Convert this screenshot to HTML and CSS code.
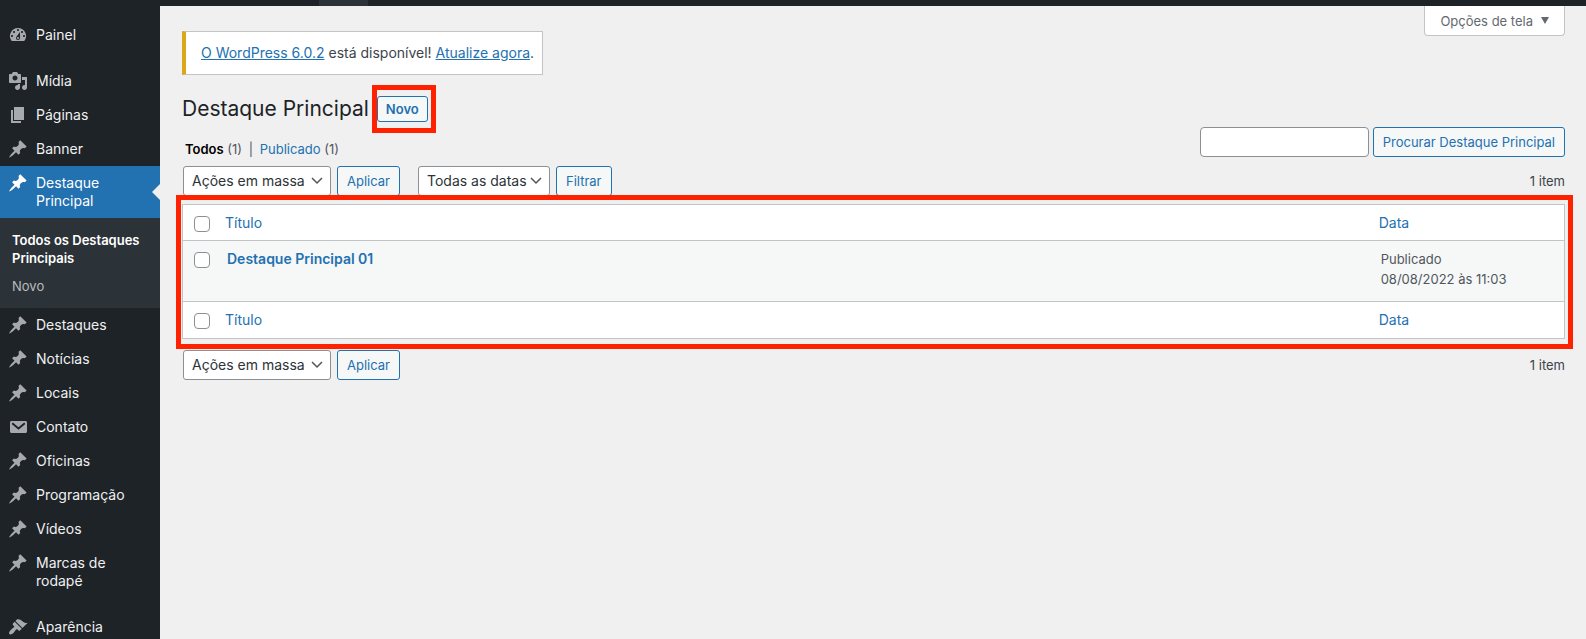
FILE: index.html
```html
<!DOCTYPE html>
<html lang="pt-BR">
<head>
    <meta charset="UTF-8">
    <meta name="viewport" content="width=device-width, initial-scale=1.0">
    <title>Destaque Principal</title>
    <link rel="stylesheet" href="styles.css">
</head>
<body>

<!-- Ícones do menu -->
<svg class="sprite" aria-hidden="true">
    <symbol id="icon-dashboard" viewBox="0 0 20 20"><path fill-rule="evenodd" d="M3.76 16h12.48A7.998 7.998 0 0 0 10 3a7.998 7.998 0 0 0-6.24 13zM10 4c.55 0 1 .45 1 1s-.45 1-1 1-1-.45-1-1 .45-1 1-1zM6 6c.55 0 1 .45 1 1s-.45 1-1 1-1-.45-1-1 .45-1 1-1zm8 0c.55 0 1 .45 1 1s-.45 1-1 1-1-.45-1-1 .45-1 1-1zm-5.37 5.55L12 7v6c0 1.1-.9 2-2 2s-2-.9-2-2c0-.57.24-1.08.63-1.45zM4 10c.55 0 1 .45 1 1s-.45 1-1 1-1-.45-1-1 .45-1 1-1zm12 0c.55 0 1 .45 1 1s-.45 1-1 1-1-.45-1-1 .45-1 1-1zm-5 3c0-.55-.45-1-1-1s-1 .45-1 1 .45 1 1 1 1-.45 1-1z"/></symbol>
    <symbol id="icon-media" viewBox="0 0 20 20"><path fill-rule="evenodd" d="M13 11V4c0-.55-.45-1-1-1h-1.67L9 1H5L3.67 3H2c-.55 0-1 .45-1 1v7c0 .55.45 1 1 1h10c.55 0 1-.45 1-1zM7 4.5c1.38 0 2.5 1.12 2.5 2.5S8.38 9.5 7 9.5 4.5 8.38 4.5 7 5.62 4.5 7 4.5zM14 6h5v10.5c0 1.38-1.12 2.5-2.5 2.5S14 17.88 14 16.5s1.12-2.5 2.5-2.5c.17 0 .34.02.5.05V9h-3V6zm-4 8.05V13h2v3.5c0 1.38-1.12 2.5-2.5 2.5S7 17.88 7 16.5 8.12 14 9.5 14c.17 0 .34.02.5.05z"/></symbol>
    <symbol id="icon-page" viewBox="0 0 20 20"><path d="M6 15V2h10v13H6zm-1 1h8v2H3V5h2v11z"/></symbol>
    <symbol id="icon-pin" viewBox="0 0 20 20"><path d="M10.44 3.02l1.82-1.82 6.36 6.35-1.83 1.82c-1.05-.68-2.48-.57-3.41.36l-.75.75c-.92.93-1.04 2.35-.35 3.41l-1.83 1.82-2.41-2.41-2.8 2.79c-.42.42-3.38 2.71-3.8 2.29s1.86-3.39 2.28-3.81l2.79-2.79L4.1 9.36l1.83-1.82c1.05.69 2.48.57 3.4-.36l.75-.75c.93-.92 1.05-2.35.36-3.41z"/></symbol>
    <symbol id="icon-email" viewBox="0 0 20 20"><path d="M3.5 4h14c.83 0 1.5.67 1.5 1.5v9c0 .83-.67 1.5-1.5 1.5h-14c-.83 0-1.5-.67-1.5-1.5v-9C2 4.670 2.670 4 3.500 4z"/><path d="M4.200 6.200l6.300 5.300 6.300-5.300" fill="none" stroke="#1d2327" stroke-width="1.800"/></symbol>
    <symbol id="icon-appearance" viewBox="0 0 20 20"><path d="M14.48 11.06L7.41 3.99l1.5-1.5c.5-.56 2.3-.47 3.51.32 1.21.8 1.43 1.28 2.91 2.1 1.18.64 2.45 1.26 4.45.85zm-.71.71L6.7 4.7 4.93 6.47c-.39.39-.39 1.02 0 1.41l1.06 1.06c.39.39.39 1.03 0 1.42-.6.6-1.43 1.11-2.21 1.69-.35.26-.7.53-1.01.84C1.43 14.23.4 16.08 1.4 17.07c.99 1 2.84-.03 4.18-1.36.31-.31.58-.66.85-1.02.57-.78 1.08-1.61 1.69-2.21.39-.39 1.02-.39 1.41 0l1.06 1.06c.39.39 1.02.39 1.41 0z"/></symbol>
</svg>

<div class="admin-bar"><span class="admin-bar-item"></span></div>

<div class="layout">
    <nav class="menu">
        <a class="menu-item" href="#"><svg class="icon"><use href="#icon-dashboard"/></svg><span>Painel</span></a>
        <div class="separator"></div>
        <a class="menu-item" href="#"><svg class="icon"><use href="#icon-media"/></svg><span>Mídia</span></a>
        <a class="menu-item" href="#"><svg class="icon"><use href="#icon-page"/></svg><span>Páginas</span></a>
        <a class="menu-item" href="#"><svg class="icon"><use href="#icon-pin"/></svg><span>Banner</span></a>
        <a class="menu-item current" href="#"><svg class="icon"><use href="#icon-pin"/></svg><span>Destaque Principal</span></a>
        <div class="submenu">
            <a class="current" href="#">Todos os Destaques Principais</a>
            <a href="#">Novo</a>
        </div>
        <a class="menu-item" href="#"><svg class="icon"><use href="#icon-pin"/></svg><span>Destaques</span></a>
        <a class="menu-item" href="#"><svg class="icon"><use href="#icon-pin"/></svg><span>Notícias</span></a>
        <a class="menu-item" href="#"><svg class="icon"><use href="#icon-pin"/></svg><span>Locais</span></a>
        <a class="menu-item" href="#"><svg class="icon"><use href="#icon-email"/></svg><span>Contato</span></a>
        <a class="menu-item" href="#"><svg class="icon"><use href="#icon-pin"/></svg><span>Oficinas</span></a>
        <a class="menu-item" href="#"><svg class="icon"><use href="#icon-pin"/></svg><span>Programação</span></a>
        <a class="menu-item" href="#"><svg class="icon"><use href="#icon-pin"/></svg><span>Vídeos</span></a>
        <a class="menu-item" href="#"><svg class="icon"><use href="#icon-pin"/></svg><span>Marcas de rodapé</span></a>
        <div class="separator"></div>
        <a class="menu-item" href="#"><svg class="icon"><use href="#icon-appearance"/></svg><span>Aparência</span></a>
    </nav>

    <main class="content">
        <div class="top-row">
            <div class="notice"><a href="#">O WordPress 6.0.2</a> está disponível! <a href="#">Atualize agora</a>.</div>
            <button type="button" class="screen-options">Opções de tela <span class="arrow"></span></button>
        </div>

        <div class="title-row">
            <h1>Destaque Principal</h1>
            <div class="highlight highlight-new">
                <a class="title-action" href="#">Novo</a>
            </div>
        </div>

        <div class="filter-row">
            <div class="views">
                <a class="current" href="#">Todos</a> <span>(1)</span>
                <span class="divider">|</span>
                <a href="#">Publicado</a> <span>(1)</span>
            </div>
            <form class="search">
                <input type="search" class="search-input" aria-label="Procurar Destaque Principal">
                <button type="button" class="button">Procurar Destaque Principal</button>
            </form>
        </div>

        <div class="tablenav">
            <select class="select-bulk" aria-label="Ações em massa">
                <option>Ações em massa</option>
            </select>
            <button type="button" class="button">Aplicar</button>
            <select class="select-date" aria-label="Filtrar por data">
                <option>Todas as datas</option>
            </select>
            <button type="button" class="button">Filtrar</button>
            <span class="count">1 item</span>
        </div>

        <div class="highlight highlight-table">
            <table class="list">
                <thead>
                    <tr>
                        <th class="check"><input type="checkbox" aria-label="Selecionar todos"></th>
                        <th><a href="#">Título</a></th>
                        <th class="date"><a href="#">Data</a></th>
                    </tr>
                </thead>
                <tbody>
                    <tr>
                        <td class="check"><input type="checkbox" aria-label="Selecionar Destaque Principal 01"></td>
                        <td><a class="row-title" href="#">Destaque Principal 01</a></td>
                        <td class="date">Publicado<br>08/08/2022 às 11:03</td>
                    </tr>
                </tbody>
                <tfoot>
                    <tr>
                        <th class="check"><input type="checkbox" aria-label="Selecionar todos"></th>
                        <th><a href="#">Título</a></th>
                        <th class="date"><a href="#">Data</a></th>
                    </tr>
                </tfoot>
            </table>
        </div>

        <div class="tablenav bottom">
            <select class="select-bulk" aria-label="Ações em massa">
                <option>Ações em massa</option>
            </select>
            <button type="button" class="button">Aplicar</button>
            <span class="count">1 item</span>
        </div>
    </main>
</div>

</body>
</html>
```

FILE: styles.css
```css
* {
    box-sizing: border-box;
}
body {
    margin: 0;
    height: 100vh;
    display: flex;
    flex-direction: column;
    overflow: hidden;
    background-color: #f0f0f0;
    color: #3c434a;
    font-family: Inter, "Liberation Sans", sans-serif;
    font-size: 13px;
    line-height: 20px;
}
a {
    color: #2271b1;
    text-decoration: none;
}
button, input, select {
    font-family: inherit;
    margin: 0;
}
.sprite {
    display: none;
}

/* Barra superior */
.admin-bar {
    flex: none;
    height: 6px;
    padding-left: 319px;
    background-color: #1d2327;
}
.admin-bar-item {
    display: block;
    width: 49px;
    height: 100%;
    background-color: #2c3338;
}
.layout {
    flex: 1;
    display: flex;
    min-height: 0;
}

/* Menu lateral */
.menu {
    flex: none;
    width: 160px;
    padding-top: 12px;
    background-color: #1d2327;
}
.menu-item {
    display: flex;
    gap: 8px;
    padding: 8px 20px 8px 8px;
    color: #f0f0f1;
    font-size: 14px;
    line-height: 18px;
}
.icon {
    flex: none;
    width: 20px;
    height: 20px;
    margin: -1px 0;
    fill: #a7aaad;
}
.menu-item.current {
    position: relative;
    background-color: #2271b1;
    color: #fff;
}
.menu-item.current .icon {
    fill: #fff;
}
.menu-item.current::after {
    content: "";
    position: absolute;
    right: 0;
    top: 50%;
    margin-top: -8px;
    border: 8px solid transparent;
    border-left: none;
    border-right-color: #f0f0f0;
}
.separator {
    height: 12px;
}
.submenu {
    padding: 8px 0;
    background-color: #2c3338;
}
.submenu a {
    display: block;
    padding: 5px 12px;
    color: #b9bcbf;
    line-height: 18px;
}
.submenu a.current {
    color: #fff;
    font-weight: 600;
}

/* Conteúdo */
.content {
    flex: 1;
    padding: 0 21px 0 22px;
}
.top-row {
    display: flex;
    justify-content: space-between;
    align-items: flex-start;
}
.notice {
    margin-top: 25px;
    padding: 11px 8px 11px 15px;
    background-color: #fff;
    border: 1px solid #c3c4c7;
    border-left: 4px solid #dba617;
    font-size: 14px;
}
.notice a {
    text-decoration: underline;
}
.screen-options {
    display: flex;
    align-items: center;
    gap: 8px;
    height: 30px;
    padding: 0 15px;
    background-color: #fff;
    border: 1px solid #c3c4c7;
    border-top: none;
    border-radius: 0 0 4px 4px;
    color: #646970;
    font-size: 13px;
}
.arrow {
    border: 4px solid transparent;
    border-top: 7px solid #646970;
    border-bottom: none;
}
.title-row {
    display: flex;
    align-items: center;
    gap: 8px;
    height: 26px;
    margin-top: 21px;
}
h1 {
    margin: 0;
    color: #1d2327;
    font-size: 21px;
    font-weight: 400;
    line-height: 26px;
}
.title-action {
    display: block;
    padding: 0 8px;
    background-color: #f6f7f7;
    border: 1px solid #2271b1;
    border-radius: 3px;
    font-weight: 600;
    line-height: 24px;
}

/* Molduras vermelhas */
.highlight {
    position: relative;
}
.highlight::after {
    content: "";
    position: absolute;
    border: 5px solid #ff2200;
    pointer-events: none;
}
.highlight-new::after {
    inset: -11px -8px -11px -5px;
}
.highlight-table::after {
    inset: -9px -8px -10px -6px;
}

.filter-row {
    display: flex;
    justify-content: space-between;
    align-items: flex-end;
    margin-top: 5px;
}
.views {
    padding-left: 3px;
    color: #50575e;
    line-height: 16px;
}
.views .current {
    color: #000;
    font-weight: 600;
}
.divider {
    margin: 0 3px;
}
.search {
    display: flex;
    gap: 4px;
}
.search-input {
    width: 169px;
    height: 30px;
    background-color: #fff;
    border: 1px solid #8c8f94;
    border-radius: 4px;
}
.button {
    height: 30px;
    padding: 0 9px;
    background-color: #f6f7f7;
    border: 1px solid #2271b1;
    border-radius: 3px;
    color: #2271b1;
    font-size: 13px;
}
.tablenav {
    display: flex;
    align-items: center;
    gap: 6px;
    margin: 9px 0 8px;
    padding-left: 1px;
}
.tablenav.bottom {
    margin-top: 11px;
}
select {
    appearance: none;
    height: 30px;
    padding: 0 18px 2px 8px;
    background: #fff url("data:image/svg+xml,%3Csvg xmlns='http://www.w3.org/2000/svg' viewBox='0 0 12 8'%3E%3Cpath d='M1 1l5 5 5-5' fill='none' stroke='%23555' stroke-width='1.500'/%3E%3C/svg%3E") no-repeat right 7px center / 12px 8px;
    border: 1px solid #8c8f94;
    border-radius: 3px;
    color: #2c3338;
    font-size: 14px;
}
.select-bulk {
    width: 148px;
}
.select-date {
    width: 132px;
    margin-left: 12px;
}
.count {
    margin-left: auto;
}

/* Tabela */
.list {
    width: 100%;
    table-layout: fixed;
    border-spacing: 0;
    background-color: #fff;
    border: 1px solid #c3c4c7;
}
.list th {
    height: 36px;
    padding: 0 8px;
    font-size: 14px;
    font-weight: 400;
    text-align: left;
}
.list thead th {
    border-bottom: 1px solid #c3c4c7;
}
.list tfoot th {
    height: 37px;
    border-top: 1px solid #c3c4c7;
}
.list td {
    height: 60px;
    padding: 8px 10px;
    background-color: #f6f7f7;
    color: #50575e;
    vertical-align: top;
}
.list .check {
    width: 34px;
    padding-left: 11px;
    padding-right: 0;
}
.list .date {
    width: 14%;
}
.list input {
    display: block;
    appearance: none;
    width: 16px;
    height: 16px;
    margin-top: 2px;
    background-color: #fff;
    border: 1px solid #8c8f94;
    border-radius: 4px;
}
.list td input {
    margin-top: 3px;
}
.row-title {
    font-size: 14px;
    font-weight: 600;
}
```
